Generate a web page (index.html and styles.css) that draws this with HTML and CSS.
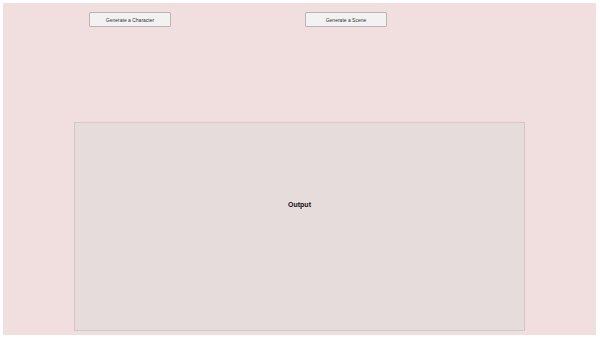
FILE: index.html
```html
<!DOCTYPE html>
<html lang="en">
<head>
    <meta charset="UTF-8">
    <meta name="viewport" content="width=device-width, initial-scale=1.0">
    <title>Generator</title>
    <link rel="stylesheet" href="styles.css">
</head>
<body>
    <div class="app">
        <div class="buttons">
            <button class="gen-btn">Generate a Character</button>
            <button class="gen-btn">Generate a Scene</button>
        </div>
        <div class="output">
            <p>Output</p>
        </div>
    </div>
</body>
</html>
```

FILE: styles.css
```css
body {
    margin: 0;
    padding: 3px 4px 3px 3px;
    background-color: #ffffff;
    font-family: "Liberation Sans", Arial, sans-serif;
}

.app {
    height: 332px;
    background-color: #f1dfe0;
    box-sizing: border-box;
    padding-top: 9px;
    display: flex;
    flex-direction: column;
    align-items: center;
}

.buttons {
    align-self: stretch;
    display: flex;
    padding-left: 86px;
    gap: 134px;
}

.gen-btn {
    width: 82px;
    height: 15px;
    padding: 0;
    font-family: "Liberation Sans", Arial, sans-serif;
    font-size: 5px;
    color: #333;
    background-color: #f3f2f2;
    border: 1px solid #b9b5b5;
    border-radius: 1px;
}

.output {
    margin-top: 95px;
    width: 451px;
    height: 209px;
    box-sizing: border-box;
    padding-top: 78px;
    background-color: #e7dcdc;
    border: 1px solid #d3c8c8;
    display: flex;
    justify-content: center;
    align-items: flex-start;
}

.output p {
    margin: 0;
    font-size: 7px;
    font-weight: bold;
    color: #111;
}
```
